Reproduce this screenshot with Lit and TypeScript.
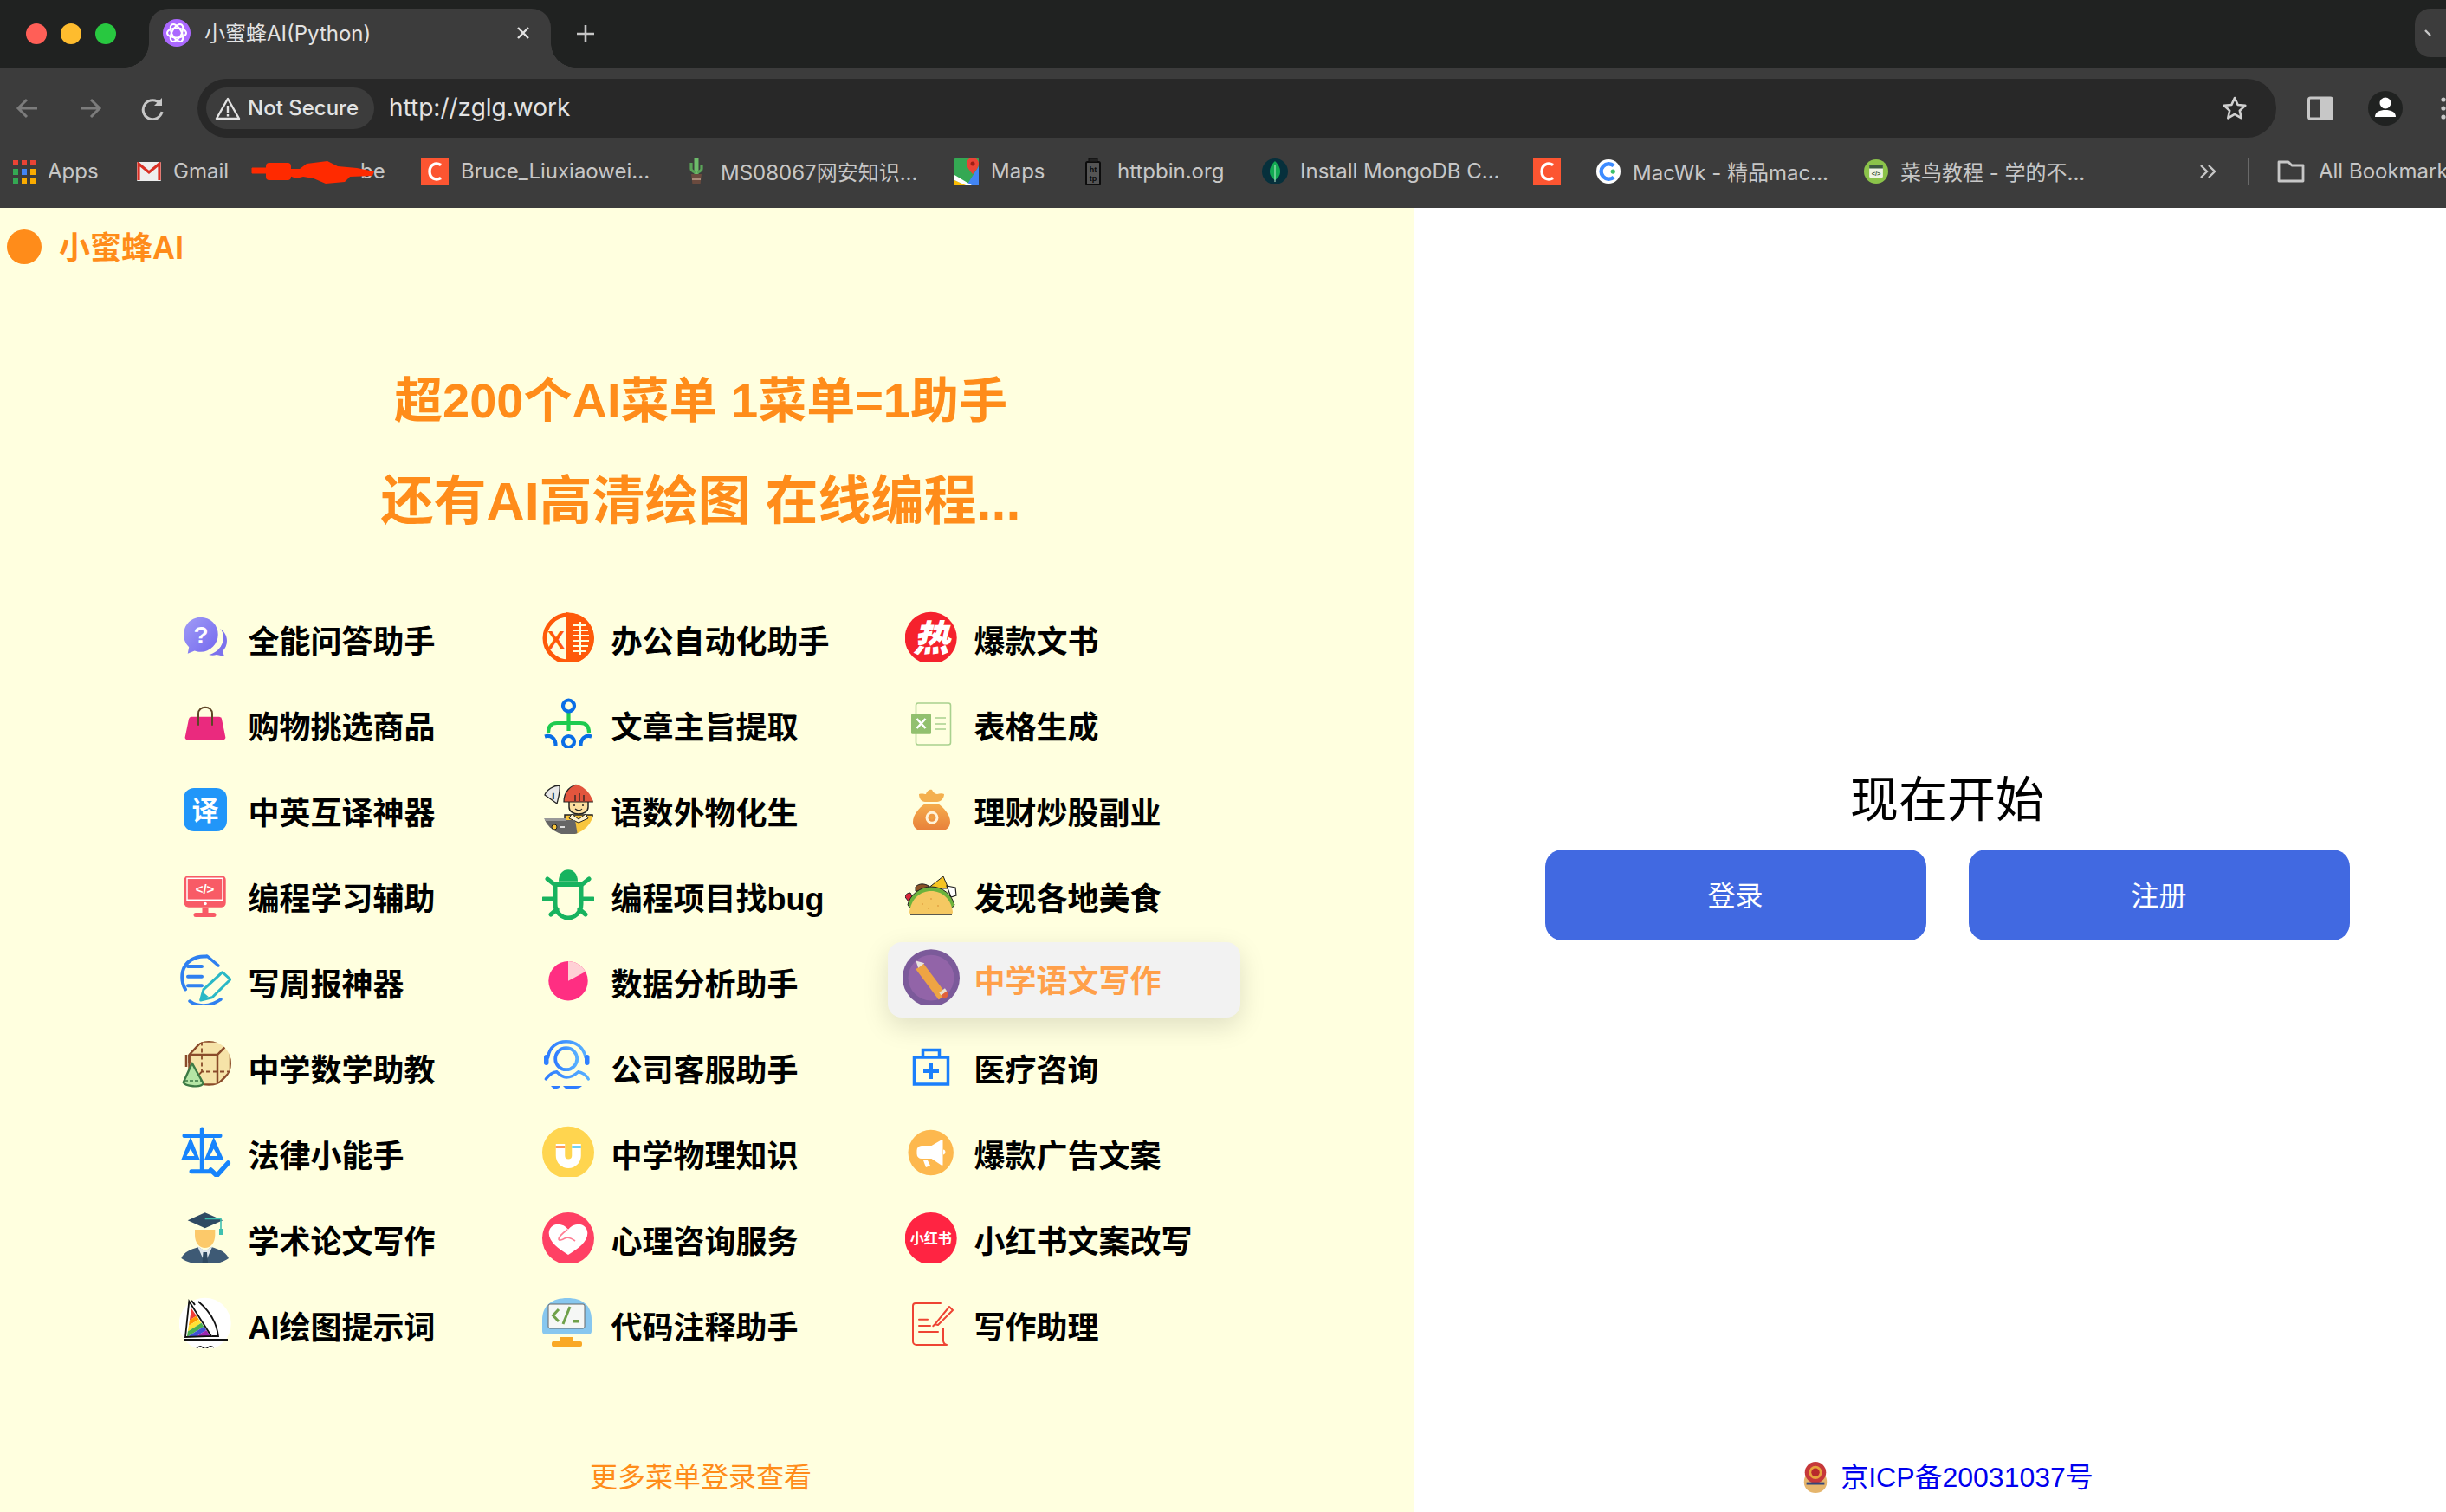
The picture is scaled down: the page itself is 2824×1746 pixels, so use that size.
import { LitElement, html, css, TemplateResult } from "lit";
import { customElement } from "lit/decorators.js";

const CJK = "'Noto Sans CJK SC'";

// 60x60 menu icons, drawn by eye from the reference
const icons: Record<string, TemplateResult> = {
  ask: html`<svg viewBox="0 0 60 60"><defs><linearGradient id="ask" x1="0" y1="0" x2="1" y2="1"><stop offset="0" stop-color="#a09cf6"/><stop offset="1" stop-color="#7468ee"/></linearGradient></defs>
    <path d="M47 21c5 3 8 8 8 14 0 5-2 9-5 12l2 6-9-2c-3 1-6 1-9 0 9-2 17-10 17-20 0-4-1-7-4-10z" fill="#7c72ec"/>
    <path d="M24.700 7.700a20 20 0 0 1 0 40c-2.500 0-5-.5-7-1.300l-8 3.300 1.500-7.500a20 20 0 0 1 13.500-34.500z" fill="url(#ask)"/>
    <text x="25" y="38" font-size="28" font-weight="700" fill="#fff" text-anchor="middle" font-family="Liberation Sans">?</text></svg>`,
  bag: html`<svg viewBox="0 0 60 60"><path d="M14 23.700h32a3 3 0 0 1 3 2.500l4.300 21a2.600 2.600 0 0 1-2.600 3.100H9.300a2.600 2.600 0 0 1-2.600-3.100l4.300-21a3 3 0 0 1 3-2.500z" fill="#ea2a7e"/>
    <path d="M22 33.700V20c0-4.500 3.500-7.300 8-7.300s8 2.800 8 7.300v13.700" fill="none" stroke="#5f4526" stroke-width="2"/></svg>`,
  translate: html`<svg viewBox="0 0 60 60"><rect x="5" y="7" width="50" height="50" rx="12" fill="#2196f9"/>
    <text x="30" y="44" font-size="31" font-weight="700" fill="#fff" text-anchor="middle" font-family=${CJK}>译</text></svg>`,
  monitor: html`<svg viewBox="0 0 60 60"><rect x="5.700" y="9" width="48" height="36.700" rx="5" fill="#f85b66"/>
    <rect x="9" y="12.300" width="41" height="25" fill="none" stroke="#fff" stroke-width="1.500"/>
    <text x="29.500" y="30" font-size="15" font-weight="700" fill="#fff" text-anchor="middle" font-family="Liberation Sans">&lt;/&gt;</text>
    <circle cx="30" cy="41.500" r="1.800" fill="#fff"/>
    <path d="M26.500 45.700h7V52h-7zM19 52h21a2.500 2.500 0 0 1 0 5H19a2.500 2.500 0 0 1 0-5z" fill="#f85b66"/></svg>`,
  report: html`<svg viewBox="0 0 60 60"><g fill="none" stroke="#2f80f0" stroke-linecap="round" stroke-width="4">
    <path d="M31 3.500c-13-1-24 6-27 17-1.500 7-1 14 3 21"/><path d="M32 3l13 11" stroke-width="3.500"/><path d="M12 55c9 7 23 7 36-2" stroke-width="3.500"/>
    <path d="M10 15h16M10 26.700h16M10 37.300h16"/></g>
    <path d="M24.700 54L28 41.700 49.700 21.700 59 30 38 50.700z" fill="none" stroke="#2ab8c6" stroke-width="3" stroke-linejoin="round"/><path d="M24.700 54l3-9 6 5z" fill="#2ab8c6"/></svg>`,
  math: html`<svg viewBox="0 0 60 60"><defs><clipPath id="math"><circle cx="34" cy="28" r="26"/></clipPath></defs>
    <g clip-path="url(#math)"><path d="M12 18L26 2h34v36L44 53H12z" fill="#f6e3a8"/>
    <g fill="none" stroke="#8a4b2a" stroke-width="2.500"><path d="M11.500 18L26 2.500h33v35L44 52.500H11.500zM11.500 18h32.500v34.500M44 18L59 2.500"/>
    <path d="M26 2.500v35h33M26 37.500L11.500 52.500" stroke-dasharray="5 3" stroke-width="1.800"/></g></g>
    <path d="M8 18v14M11.500 18v10" stroke="#8a4b2a" stroke-width="2.500"/>
    <path d="M14.700 27.700L4.700 50c2 4 20 7 23 1z" fill="#b5e5a5" stroke="#3d7a45" stroke-width="2.400" stroke-linejoin="round"/>
    <path d="M6 48h21" stroke="#3d7a45" stroke-width="1.500" stroke-dasharray="4 2" fill="none"/></svg>`,
  law: html`<svg viewBox="0 0 60 60"><path d="M26.300 5v48.700M6 12.500h41M14 53.700h24" fill="none" stroke="#1784fc" stroke-width="5" stroke-linecap="round"/>
    <path fill="#1784fc" fill-rule="evenodd" d="M13 14L2.300 40.300h21.400zM13 27.500l-4.500 8.500h9zM39.700 14L29 40.300h22.300zM39.700 27.500l-4.500 8.500h9z"/>
    <path d="M36.300 52l7 6.500L56.300 44" fill="none" stroke="#1784fc" stroke-width="5.500" stroke-linecap="round" stroke-linejoin="round"/></svg>`,
  grad: html`<svg viewBox="0 0 60 60"><path d="M18 22h23.300v6c0 9-5 15-11.600 15S18 37 18 28z" fill="#fcc96a"/>
    <path d="M2.300 55c3-7 10-10 20-13l7.400 5 7.300-5c10 3 17 6 20 13-7 5-16 7-27.300 7S9.300 60 2.300 55z" fill="#3e5a75"/>
    <path d="M21 41l8.700 20 8.700-20-8.700 5.500z" fill="#dfe7ee"/><path d="M27.500 48h4.500l1 13h-6.500z" fill="#2f4a63"/>
    <path d="M9.700 11.300L29.700 2.300l20.600 9-20.600 9z" fill="#2f4a63"/><path d="M29.700 9.500h18.300v13" fill="none" stroke="#3fc0b0" stroke-width="1.600"/><rect x="46" y="21" width="4" height="7" fill="#3fc0b0"/></svg>`,
  sail: html`<svg viewBox="0 0 60 60"><circle cx="29.700" cy="31.700" r="30" fill="#fff"/>
    <defs><clipPath id="sail"><path d="M14 14l22 32H9z"/></clipPath></defs>
    <g clip-path="url(#sail)"><g transform="rotate(-32 24 34)">
      <rect x="-10" y="10" width="70" height="12" fill="#ef3b36"/><rect x="-10" y="22" width="70" height="5" fill="#ff9800"/><rect x="-10" y="27" width="70" height="5" fill="#ffe135"/><rect x="-10" y="32" width="70" height="5" fill="#4caf50"/><rect x="-10" y="37" width="70" height="5" fill="#3f51d5"/><rect x="-10" y="42" width="70" height="14" fill="#9c27b0"/></g></g>
    <g fill="none" stroke="#111" stroke-width="1.800"><path d="M11.300 5.700L37 46 7 47zM22 6c12 10 21 24 23 40l-7 0M14 5c2 2 3 3 4 5"/><path d="M5 50h51" stroke-width="2.200"/><path d="M20 60c3-3 5-3 7-1s4 2 6 0 4-2 7 0" stroke-width="1.300"/></g></svg>`,

  office: html`<svg viewBox="0 0 60 60"><circle cx="30" cy="32" r="27" fill="none" stroke="#ff5a0a" stroke-width="5"/>
    <path d="M28 2l6 1.500h0c14 0 26 13 26 28.500S48 60 34 60v2l-6-1.500z" fill="#ff5a0a"/>
    <g fill="#ffffdf"><rect x="35" y="16" width="16" height="2"/><rect x="35" y="22" width="18" height="2"/><rect x="35" y="28" width="19" height="2"/><rect x="35" y="34" width="19" height="2"/><rect x="35" y="40" width="18" height="2"/><rect x="35" y="46" width="16" height="2"/><rect x="43" y="13" width="2" height="38"/></g>
    <text x="16" y="44" font-size="30" fill="#ff5a0a" text-anchor="middle" font-family="Liberation Sans">X</text></svg>`,
  tree: html`<svg viewBox="0 0 60 60"><g fill="none" stroke-width="4.200">
    <path d="M30.500 19v21M7 42c0-7 3-11 10-11h27c7 0 10 4 10 11" stroke="#1ecb4f"/>
    <g stroke="#0a6ee6"><circle cx="30.500" cy="11" r="6.500"/><circle cx="30.500" cy="52.500" r="6.500"/><path d="M3 46.500c7-2 13 2 12.500 11M57 46.500c-7-2-13 2-12.500 11"/></g></g></svg>`,
  tutor: html`<svg viewBox="0 0 60 60"><defs><clipPath id="tutor"><circle cx="30" cy="31" r="30"/></clipPath></defs>
    <g clip-path="url(#tutor)"><path d="M26 38h32l4 24H26z" fill="#f8c63d" stroke="#222" stroke-width="1.500"/>
    <path d="M34 37l8 6 8-6 3 5-11 5-11-5z" fill="#fff4d0" stroke="#222"/>
    <path d="M0 44h38l3 18H0z" fill="#666"/><rect x="0" y="42" width="27" height="3" fill="#999"/><circle cx="14" cy="52" r="3" fill="#f8c63d" stroke="#222"/><rect x="21" y="51" width="5" height="2" fill="#ddd"/>
    <path d="M31 20h22v9c0 5-5 8-11 8s-11-3-11-8z" fill="#fbdf9f" stroke="#222" stroke-width="1.500"/>
    <path d="M25 23c0-12 8-20 17-20s17 8 17 20H25z" fill="#e2553d" stroke="#222" stroke-width="1.200"/>
    <path d="M38 15v7M43 13v9M48 15v7" stroke="#222" stroke-width="1.300"/><circle cx="37" cy="27" r="1" fill="#222"/><circle cx="47" cy="27" r="1" fill="#222"/><path d="M38 31c3 2.500 6 2.500 8 0" fill="none" stroke="#222" stroke-width="1.200"/></g>
    <path d="M3 15C5 9 13 4 20 4c1 7-1 13-3 21z" fill="#e8e8e8" stroke="#222" stroke-width="1.300"/><text x="11" y="20" font-size="13" font-weight="700" fill="#222" font-family="Liberation Sans">i</text></svg>`,
  bug: html`<svg viewBox="0 0 60 60"><g fill="none" stroke="#17b35f" stroke-width="5" stroke-linecap="round">
    <path d="M15 19.500h30V42c0 10-8 16-15 16S15 52 15 42z"/>
    <path d="M6 13l9 7M54 13l-9 7M1 36h13M59 36H46M10 54l7-6M50 54l-7-6"/></g>
    <path d="M19 15.700C19 7 24 2.300 30 2.300S41 7 41 15.700z" fill="#17b35f"/></svg>`,
  pie: html`<svg viewBox="0 0 60 60"><circle cx="30" cy="31.700" r="22.700" fill="#ff2e82"/><path d="M30 31.700V9a22.700 22.700 0 0 1 20 12z" fill="#ffd0d5"/></svg>`,
  service: html`<svg viewBox="0 0 60 60"><defs><linearGradient id="svc" x1="0" y1="0" x2="1" y2="0"><stop offset="0" stop-color="#2f7dff"/><stop offset="1" stop-color="#58b0ff"/></linearGradient></defs>
    <g fill="none" stroke="url(#svc)" stroke-linecap="round">
    <circle cx="27.700" cy="22.700" r="12.500" stroke-width="3.800"/>
    <path d="M6.700 21C8 9 17 2.700 27.700 2.700S48 9 50 21" stroke-width="3.500"/>
    <path d="M4.300 46c3-4 8-8 12.400-8.300 3 3 7 6 11.300 6.300 5 0 10-3 13.700-6.300C46 38 51 42 53.300 46" stroke-width="3.400"/></g>
    <path d="M10 54h11a5 5 0 0 1-5 3h-3zM24 54h22c-2 2-4 3-7 3H27z" fill="#2f7dff"/>
    <rect x="2" y="18" width="5.500" height="12" rx="2.700" fill="#2f80ff"/><rect x="49" y="18" width="5.500" height="12" rx="2.700" fill="#2f80ff"/></svg>`,
  magnet: html`<svg viewBox="0 0 60 60"><circle cx="30" cy="31.700" r="30" fill="#ffd54f"/>
    <path d="M21 22v13.500a9.250 9.250 0 0 0 18.500 0V22" fill="none" stroke="#fff" stroke-width="10.500"/>
    <rect x="15.700" y="24" width="10.500" height="3" fill="#ff9a5a"/><rect x="34.300" y="24" width="10.500" height="3" fill="#6fd0f5"/></svg>`,
  heart: html`<svg viewBox="0 0 60 60"><circle cx="30" cy="32" r="30" fill="#ff4164"/>
    <path d="M30 51C19 44 7.700 36 7.700 26c0-6 4.500-10.300 10.300-10.300 5 0 9 2 12 6 3-4 7-6 12-6 5.800 0 10.300 4.300 10.300 10.300 0 10-11 18-22.300 25z" fill="#fff"/>
    <path d="M29 22c-4 3-10 8-10 11 0 2 4 1 7-1 4-2 8 0 12 3" fill="none" stroke="#ff7d94" stroke-width="1.600"/></svg>`,
  code: html`<svg viewBox="0 0 60 60"><path d="M0 27C0 10 12 2 29 2s28 8 28 25v13a4 4 0 0 1-4 4H4a4 4 0 0 1-4-4z" fill="#87c7ef"/>
    <rect x="7" y="9" width="42" height="28" rx="2" fill="#f5f7f5" stroke="#666" stroke-width="1"/>
    <path d="M19 15l-6.500 7 6.500 7" fill="none" stroke="#6fa04a" stroke-width="3"/><path d="M32 12l-8 20" stroke="#6fa04a" stroke-width="3"/><rect x="35" y="27" width="8" height="3.500" fill="#6fa04a"/>
    <rect x="21" y="47" width="14" height="5" fill="#f9a825"/><rect x="11" y="52" width="35" height="6" rx="2" fill="#f9a825"/></svg>`,

  hot: html`<svg viewBox="0 0 60 60"><circle cx="29.700" cy="31.700" r="30" fill="#f5222d"/>
    <text x="30" y="47" font-size="42" font-weight="900" fill="#fff" text-anchor="middle" font-style="italic" font-family=${CJK}>热</text></svg>`,
  sheet: html`<svg viewBox="0 0 60 60"><rect x="12.500" y="8" width="40" height="48" rx="2.500" fill="none" stroke="#a9d18e" stroke-width="1.600"/>
    <rect x="7" y="20" width="23" height="23.700" rx="1.500" fill="#92c06f"/><path d="M13.500 26l10 11M23.500 26l-10 11" stroke="#fff" stroke-width="2.600"/>
    <path d="M34 25h13M34 32h13M34 38h13" stroke="#a9d18e" stroke-width="1.600"/></svg>`,
  money: html`<svg viewBox="0 0 60 60"><defs><linearGradient id="money" x1="0" y1="0" x2="0" y2="1"><stop offset="0" stop-color="#f5ad4c"/><stop offset="1" stop-color="#e8803a"/></linearGradient></defs>
    <path d="M16 14c4-1 6 0 8 0 1-3 4-6 7-5 1 2 3 5 6 5 3-1 6-1 8 0 0 5-4 9-8 9H23c-4 0-7-4-7-9z" fill="#f4b04f"/>
    <path d="M23 25h15c7 5 14 13 14 21 0 6-4 10-10 10H19c-6 0-10-4-10-10 0-8 7-16 14-21z" fill="url(#money)"/>
    <circle cx="31" cy="41.300" r="6" fill="none" stroke="#fff3d8" stroke-width="3"/><path d="M31 38.500l2.800 2.800-2.800 2.800-2.800-2.800z" fill="#f0a040"/></svg>`,
  taco: html`<svg viewBox="0 0 60 60"><path d="M26 24L44 10l6 14z" fill="#f6c420" stroke="#222" stroke-width="1"/>
    <path d="M12 22c4-4 10-4 15-1l-3 6H12z" fill="#8a5226" stroke="#222" stroke-width="1"/>
    <path d="M48 21l10 2 1 9-6 2z" fill="#fff" stroke="#222" stroke-width="1.200"/>
    <path d="M0 34c0-3 3-5 6-5l3 6-5 4z" fill="#d9263a" stroke="#222"/>
    <path d="M3 43c2-11 14-21 27-21s24 9 27 21l-5 6H8z" fill="#6cb33c" stroke="#222" stroke-width="1"/>
    <path d="M5 51c2-15 12-24 25-24s23 9 25 24c0 2-1 3-3 3H8c-2 0-3-1-3-3z" fill="#f5c862"/><path d="M6 54h48" stroke="#222" stroke-width="1.500"/>
    <g fill="#e0a040"><circle cx="20" cy="42" r=".9"/><circle cx="30" cy="36" r=".9"/><circle cx="38" cy="44" r=".9"/><circle cx="27" cy="47" r=".9"/></g></svg>`,
  pencil: html`<svg viewBox="0 0 60 60"><circle cx="30" cy="32" r="30" fill="#7b5a9a"/><circle cx="30" cy="32" r="24" fill="#9264a8"/>
    <path d="M18 20l24 32" stroke="#eea444" stroke-width="10" fill="none"/><path d="M38.500 47.500l6-4.500 2 3-6 4.500z" fill="#e8e0d0"/>
    <path d="M40.500 50.500l6-4.500c2 3 1 6-1 7.500-2 1-4 0-5-3z" fill="#e0603c"/><path d="M14 14l9 2.500-6.500 5z" fill="#e9e4de"/></svg>`,
  medical: html`<svg viewBox="0 0 60 60"><g fill="none" stroke="#1a7ffb" stroke-width="3.500"><rect x="10.500" y="21" width="39" height="31"/><path d="M20.500 21v-8.500h19V21"/></g>
    <path d="M21 37h18M30 28v18" stroke="#1a7ffb" stroke-width="4"/></svg>`,
  ad: html`<svg viewBox="0 0 60 60"><circle cx="29.700" cy="32" r="26.200" fill="#fdb84e"/>
    <path d="M42.500 17l-12 7H19a5.500 5.500 0 0 0-5.500 5.500v4A5.500 5.500 0 0 0 19 39h11.500l12 8a1 1 0 0 0 1-1V18a1 1 0 0 0-1-1z" fill="#fff"/>
    <path d="M44 28.500c3 0 3.500 5.500 0 6z" fill="#fff"/><path d="M21 41l5 0 3 6-5 2z" fill="#fff"/></svg>`,
  xhs: html`<svg viewBox="0 0 60 60"><circle cx="29.700" cy="32" r="30" fill="#ff2442"/>
    <text x="29.700" y="38" font-size="16" font-weight="700" fill="#fff" text-anchor="middle" font-family=${CJK}>小红书</text></svg>`,
  write: html`<svg viewBox="0 0 60 60"><g fill="none" stroke="#ee4433" stroke-width="2" stroke-linecap="round" stroke-linejoin="round">
    <path d="M41 8H12a3 3 0 0 0-3 3v41a4 4 0 0 0 4 4h35c-3-1-4-3-4-5V37"/><path d="M16 26.700h10M16 34h13M16 41h22"/>
    <path d="M34.300 32.300L51 12l4 4-17 17zM34.300 32.300l-2 2"/></g></svg>`,
};

const menu: [string, string][][] = [
  [["ask", "全能问答助手"], ["office", "办公自动化助手"], ["hot", "爆款文书"]],
  [["bag", "购物挑选商品"], ["tree", "文章主旨提取"], ["sheet", "表格生成"]],
  [["translate", "中英互译神器"], ["tutor", "语数外物化生"], ["money", "理财炒股副业"]],
  [["monitor", "编程学习辅助"], ["bug", "编程项目找bug"], ["taco", "发现各地美食"]],
  [["report", "写周报神器"], ["pie", "数据分析助手"], ["pencil", "中学语文写作"]],
  [["math", "中学数学助教"], ["service", "公司客服助手"], ["medical", "医疗咨询"]],
  [["law", "法律小能手"], ["magnet", "中学物理知识"], ["ad", "爆款广告文案"]],
  [["grad", "学术论文写作"], ["heart", "心理咨询服务"], ["xhs", "小红书文案改写"]],
  [["sail", "AI绘图提示词"], ["code", "代码注释助手"], ["write", "写作助理"]],
];

const csdn = html`<svg class="fav" width="32" height="32" viewBox="0 0 32 32"><rect width="32" height="32" fill="#fc5531"/><path d="M23 8.500C17 5 10 8 10 16s7 11 13 7.500" fill="none" stroke="#fff" stroke-width="3.400"/></svg>`;

const favicons: Record<string, TemplateResult> = {
  apps: html`<svg width="26" height="27" viewBox="0 0 26 27">
    <g fill="#ea4335"><rect width="6" height="6"/><rect x="10" width="6" height="6"/><rect x="20" width="6" height="6"/></g>
    <rect y="10" width="6" height="7" fill="#34a853"/><rect x="10" y="10" width="6" height="7" fill="#4285f4"/><rect x="20" y="10" width="6" height="7" fill="#f9ab00"/>
    <rect y="21" width="6" height="6" fill="#34a853"/><rect x="10" y="21" width="6" height="6" fill="#f9ab00"/><rect x="20" y="21" width="6" height="6" fill="#f9ab00"/></svg>`,
  gmail: html`<svg width="28" height="22" viewBox="0 0 28 22"><rect width="28" height="22" rx="1" fill="#eee"/><path d="M2 21V2l12 10L26 2v19" fill="none" stroke="#d93025" stroke-width="3.200"/></svg>`,
  csdn,
  cactus: html`<svg width="28" height="32" viewBox="0 0 28 32"><path d="M14 1v18" stroke="#6dbb6a" stroke-width="5"/><path d="M8 6v7c0 2 2 3 5 4M20 8v5c0 2-2 3-5 4" fill="none" stroke="#5aa458" stroke-width="3.200"/><path d="M8 19h12l-1.500 12h-9z" fill="#6a4a3e"/><rect x="9" y="23" width="10" height="3" fill="#a98a78"/></svg>`,
  maps: html`<svg width="28" height="32" viewBox="0 0 28 32"><rect width="28" height="32" rx="2" fill="#34a853"/><path d="M14 32L28 10v22z" fill="#4285f4"/><path d="M0 26L14 32H0z" fill="#fbbc04"/><path d="M0 20L20 32h-7L0 26z" fill="#fff"/><path d="M21 0c4 0 7 3 7 7 0 5-7 12-7 12s-7-7-7-12c0-4 3-7 7-7z" fill="#ea4335"/><circle cx="21" cy="7" r="2.500" fill="#9c1f16"/></svg>`,
  httpbin: html`<svg width="28" height="32" viewBox="0 0 28 32"><rect x="6" y="5" width="16" height="27" rx="1.500" fill="#555" stroke="#0c0c0c" stroke-width="2"/><rect x="9" y="1" width="10" height="4" fill="#222" stroke="#0c0c0c" stroke-width="1"/><text x="14" y="17" font-size="9" font-weight="700" fill="#0c0c0c" text-anchor="middle" font-family="Liberation Sans">ht</text><text x="14" y="27" font-size="9" font-weight="700" fill="#0c0c0c" text-anchor="middle" font-family="Liberation Sans">tp</text></svg>`,
  mongo: html`<svg width="30" height="32" viewBox="0 0 30 32"><circle cx="15" cy="16" r="15" fill="#06303c"/><path d="M15 4c5 5 6 9 6 12 0 5-3 8-6 10-3-2-6-5-6-10 0-3 1-7 6-12z" fill="#13aa52"/><path d="M15 8v20" stroke="#c1f0d0" stroke-width="1"/></svg>`,
  macwk: html`<svg width="28" height="32" viewBox="0 0 32 32"><circle cx="16" cy="16" r="16" fill="#fff"/><path d="M23 8.500a10 10 0 1 0 0 15" fill="none" stroke="#3d8bff" stroke-width="5"/><circle cx="22" cy="16" r="3" fill="#3cc06a"/></svg>`,
  runoob: html`<svg width="28" height="32" viewBox="0 0 32 32"><circle cx="16" cy="16" r="16" fill="#8bc34a"/><rect x="7" y="8" width="18" height="16" rx="1.500" fill="#eef3e4"/><rect x="7" y="8" width="18" height="4" fill="#3d5a40"/><text x="16" y="22" font-size="8.500" font-weight="700" fill="#3d5a40" text-anchor="middle" font-family="Liberation Sans">&lt;/&gt;</text></svg>`,
};

// widths are the distance to the next bookmark in the bar
const bookmarks = [
  { icon: "apps", label: "Apps", width: 143 },
  { icon: "gmail", label: "Gmail", width: 132 },
  { icon: "", label: "", width: 196 },
  { icon: "csdn", label: "Bruce_Liuxiaowei...", width: 304 },
  { icon: "cactus", label: "MS08067网安知识...", width: 312 },
  { icon: "maps", label: "Maps", width: 146 },
  { icon: "httpbin", label: "httpbin.org", width: 209 },
  { icon: "mongo", label: "Install MongoDB C...", width: 313 },
  { icon: "csdn", label: "", width: 73 },
  { icon: "macwk", label: "MacWk - 精品mac...", width: 309 },
  { icon: "runoob", label: "菜鸟教程 - 学的不...", width: 387 },
];

@customElement("browser-bar")
export class BrowserBar extends LitElement {
  static styles = css`
    :host {
      display: block;
      height: 240px;
      background: #3c3c3c;
      font-family: Inter, "Noto Sans CJK SC", sans-serif;
      color: #c7c7c7;
      overflow: hidden;
    }
    .strip {
      height: 78px;
      background: #202221;
      display: flex;
      align-items: center;
      padding-left: 30px;
    }
    .lights { display: flex; gap: 16px; }
    .lights i { width: 24px; height: 24px; border-radius: 50%; display: block; }
    .red { background: #ff5f57; }
    .amber { background: #febc2e; }
    .green { background: #28c840; }
    .tab {
      position: relative;
      align-self: flex-end;
      margin-left: 38px;
      width: 464px;
      height: 68px;
      box-sizing: border-box;
      padding: 0 23px 12px 16px;
      background: #3c3c3c;
      border-radius: 22px 22px 0 0;
      display: flex;
      align-items: center;
      color: #e3e3e3;
      font-size: 24px;
    }
    .tab::before, .tab::after {
      content: "";
      position: absolute;
      bottom: 0;
      width: 28px;
      height: 28px;
    }
    .tab::before { left: -28px; background: radial-gradient(circle at 0 0, transparent 27.500px, #3c3c3c 28px); }
    .tab::after { right: -28px; background: radial-gradient(circle at 100% 0, transparent 27.500px, #3c3c3c 28px); }
    .tab-title { margin: 0 0 3px 16px; flex: 1; }
    .plus { margin-left: 28px; display: block; }
    .tab-search {
      margin-left: auto;
      align-self: flex-start;
      margin-top: 10px;
      width: 36px;
      height: 56px;
      background: #3c3c3c;
      border-radius: 18px 0 0 18px;
    }
    .toolbar {
      height: 82px;
      display: flex;
      align-items: center;
      padding-top: 12px;
      box-sizing: border-box;
    }
    .nav { width: 228px; display: flex; flex: none; padding-left: 18px; box-sizing: border-box; gap: 44px; }
    .omnibox {
      width: 2400px;
      height: 68px;
      flex: none;
      box-sizing: border-box;
      background: #282828;
      border-radius: 34px;
      padding: 0 10px;
      display: flex;
      align-items: center;
    }
    .pill {
      height: 48px;
      width: 194px;
      flex: none;
      box-sizing: border-box;
      padding-left: 10px;
      background: #3c3c3c;
      border-radius: 24px;
      display: flex;
      align-items: center;
      gap: 8px;
      font-size: 24px;
      font-weight: 500;
      color: #e3e3e3;
    }
    .pill span { margin-bottom: 2px; }
    .url { margin: 0 0 2px 17px; font-size: 28px; color: #e3e3e3; flex: 1; }
    .star { margin-right: 23px; }
    .tools { display: flex; align-items: center; margin-left: 36px; flex: none; }
    .tools .side { margin-right: 40px; }
    .tools .me { margin-right: 44px; }
    .bookmarks {
      height: 80px;
      box-sizing: border-box;
      padding: 0 0 4px 15px;
      display: flex;
      align-items: center;
      font-size: 24px;
      white-space: nowrap;
    }
    .mark { display: flex; align-items: center; gap: 14px; flex: none; }
    .mark span, .folder span { margin-bottom: 2px; }
    .more { width: 56px; flex: none; }
    .divider { width: 2px; height: 32px; background: #6a6a6a; flex: none; margin-right: 32px; }
    .folder { display: flex; align-items: center; gap: 16px; flex: none; }
  `;

  render() {
    return html`
      <div class="strip">
        <div class="lights"><i class="red"></i><i class="amber"></i><i class="green"></i></div>
        <div class="tab">
          <svg width="32" height="32" viewBox="0 0 32 32"><circle cx="16" cy="16" r="16" fill="#ab68ff"/>
            <g fill="none" stroke="#fff" stroke-width="2"><ellipse cx="16" cy="16" rx="11" ry="5.500"/><ellipse cx="16" cy="16" rx="11" ry="5.500" transform="rotate(60 16 16)"/><ellipse cx="16" cy="16" rx="11" ry="5.500" transform="rotate(120 16 16)"/></g></svg>
          <span class="tab-title">小蜜蜂AI(Python)</span>
          <svg width="18" height="18" viewBox="0 0 18 18"><path d="M3 3l12 12M15 3L3 15" stroke="#e3e3e3" stroke-width="2.400"/></svg>
        </div>
        <svg class="plus" width="24" height="24" viewBox="0 0 24 24"><path d="M12 2v20M2 12h20" stroke="#c7c7c7" stroke-width="2.600"/></svg>
        <div class="tab-search">
          <svg width="36" height="56" viewBox="0 0 36 56"><path d="M12 25l6 6" stroke="#c7c7c7" stroke-width="2.400" fill="none"/></svg>
        </div>
      </div>
      <div class="toolbar">
        <div class="nav">
          <svg width="28" height="28" viewBox="0 0 28 28"><path d="M25 14H4M13 4L3 14l10 10" fill="none" stroke="#7c7c7c" stroke-width="3"/></svg>
          <svg width="28" height="28" viewBox="0 0 28 28"><path d="M3 14h21M15 4l10 10-10 10" fill="none" stroke="#7c7c7c" stroke-width="3"/></svg>
          <svg width="28" height="28" viewBox="0 0 28 28"><path d="M23 9a11 11 0 1 0 2 9" fill="none" stroke="#c7c7c7" stroke-width="3"/><path d="M25 2v9h-9z" fill="#c7c7c7"/></svg>
        </div>
        <div class="omnibox">
          <div class="pill">
            <svg width="30" height="28" viewBox="0 0 30 28"><path d="M15 3L2 26h26z" fill="none" stroke="#e3e3e3" stroke-width="2.400" stroke-linejoin="round"/><path d="M15 11v8M15 21v2.500" stroke="#e3e3e3" stroke-width="2.400"/></svg>
            <span>Not Secure</span>
          </div>
          <span class="url">http://zglg.work</span>
          <svg class="star" width="30" height="30" viewBox="0 0 30 30"><path d="M15 3l3.600 8 8.700.9-6.500 5.800 1.900 8.600L15 21.800l-7.700 4.500 1.900-8.600-6.500-5.800 8.700-.9z" fill="none" stroke="#d0d0d0" stroke-width="2.600" stroke-linejoin="round"/></svg>
        </div>
        <div class="tools">
          <svg class="side" width="30" height="28" viewBox="0 0 30 28"><rect x="1.500" y="2" width="27" height="24" rx="2" fill="none" stroke="#c7c7c7" stroke-width="3"/><rect x="15" y="2" width="13" height="24" fill="#c7c7c7"/></svg>
          <svg class="me" width="40" height="40" viewBox="0 0 40 40"><circle cx="20" cy="20" r="20" fill="#202221"/><circle cx="20" cy="14" r="6.500" fill="#fff"/><path d="M8 30c0-6 6-8 12-8s12 2 12 8z" fill="#fff"/></svg>
          <svg width="6" height="26" viewBox="0 0 6 26"><circle cx="3" cy="3" r="2.600" fill="#c7c7c7"/><circle cx="3" cy="13" r="2.600" fill="#c7c7c7"/><circle cx="3" cy="23" r="2.600" fill="#c7c7c7"/></svg>
        </div>
      </div>
      <div class="bookmarks">
        ${bookmarks.map(
          (b) => html`
            <div class="mark" style="width:${b.width}px">
              ${b.icon
                ? favicons[b.icon]
                : html`<svg width="158" height="32" viewBox="0 0 158 32">
                    <text x="126" y="24" font-size="24" fill="#c7c7c7" font-family="Inter">be</text>
                    <path d="M1 12h17v6H1z" fill="#ff2a00" stroke="#ff2a00" stroke-linejoin="round"/>
                    <rect x="17" y="6" width="29" height="20" rx="4" fill="#ff2a00"/>
                    <path d="M44 13h12l8-6 24-3 12 6 22 2 20 4-2 5-26 1-6 6-22 2-14-6-12-2-8 2-8-3z" fill="#ff2a00"/></svg>`}
              ${b.label ? html`<span>${b.label}</span>` : ""}
            </div>
          `
        )}
        <span class="more">
          <svg width="20" height="18" viewBox="0 0 20 18"><path d="M2 2l7 7-7 7M11 2l7 7-7 7" fill="none" stroke="#c7c7c7" stroke-width="2.400"/></svg>
        </span>
        <div class="divider"></div>
        <div class="folder">
          <svg width="32" height="26" viewBox="0 0 32 26"><path d="M2 2h11l4 4h13v18H2z" fill="none" stroke="#c7c7c7" stroke-width="2.800" stroke-linejoin="round"/></svg>
          <span>All Bookmarks</span>
        </div>
      </div>
    `;
  }
}

@customElement("menu-grid")
export class MenuGrid extends LitElement {
  static styles = css`
    :host {
      display: grid;
      grid-template-columns: repeat(3, 407px);
      gap: 12px;
      justify-content: center;
      font-family: "Liberation Sans", "Noto Sans CJK SC", sans-serif;
    }
    .card {
      height: 87px;
      box-sizing: border-box;
      padding-left: 20px;
      display: flex;
      align-items: center;
      gap: 20px;
      border-radius: 16px;
      background: #ffffdf;
      color: #000;
      font-size: 36px;
      font-weight: 700;
      white-space: nowrap;
    }
    .card svg { display: block; width: 60px; height: 60px; flex: none; margin-bottom: 10px; }
    .card span { line-height: 1; margin-top: 4px; }
    .card.active {
      background: #f2f2f2;
      color: #ffa04a;
      transform: translateY(-4px);
      box-shadow: 0 10px 30px rgba(0, 0, 0, 0.13);
    }
    .card.active svg { transform: scale(1.1); }
  `;

  render() {
    return menu.flat().map(
      ([icon, label]) => html`
        <div class="card ${icon === "pencil" ? "active" : ""}">${icons[icon]}<span>${label}</span></div>
      `
    );
  }
}

@customElement("app-root")
export class AppRoot extends LitElement {
  static styles = css`
    :host {
      display: flex;
      flex-direction: column;
      width: 100%;
      height: 100vh;
      overflow: hidden;
      background: #fff;
      font-family: "Liberation Sans", "Noto Sans CJK SC", sans-serif;
    }
    .page { flex: 1; display: flex; min-height: 0; }
    .left {
      width: 1632px;
      flex: none;
      box-sizing: border-box;
      padding-right: 14px;
      background: #ffffdf;
      color: #ff8c1a;
      display: flex;
      flex-direction: column;
    }
    .logo {
      height: 90px;
      display: flex;
      align-items: center;
      gap: 20px;
      padding-left: 8px;
      font-size: 36px;
      font-weight: 700;
    }
    .logo i { width: 40px; height: 40px; border-radius: 50%; background: #ff8c1a; display: block; }
    .logo span { margin-bottom: 5px; }
    .headline {
      margin: 76px 0 62px;
      text-align: center;
      font-size: 56px;
      font-weight: 700;
      line-height: 114px;
    }
    .headline .second { display: block; font-size: 61px; padding-top: 2px; margin-bottom: -2px; }
    .more { margin-top: auto; padding-bottom: 20px; text-align: center; font-size: 32px; line-height: 40px; }
    .right {
      flex: 1;
      box-sizing: border-box;
      padding: 644px 0 20px 40px;
      display: flex;
      flex-direction: column;
      align-items: center;
    }
    .right h2 { margin: 0 0 17px; font-size: 56px; font-weight: 400; line-height: 80px; color: #000; }
    .buttons { display: flex; gap: 49px; }
    .btn {
      width: 440px;
      height: 105px;
      padding: 0 0 4px;
      border: none;
      border-radius: 20px;
      background: #4169e1;
      color: #fff;
      font: inherit;
      font-size: 32px;
    }
    .icp { margin-top: auto; display: flex; align-items: center; gap: 12px; font-size: 32px; line-height: 40px; color: #0000ee; }
  `;

  render() {
    return html`
      <browser-bar></browser-bar>
      <div class="page">
        <div class="left">
          <div class="logo"><i></i><span>小蜜蜂AI</span></div>
          <div class="headline">超200个AI菜单 1菜单=1助手<span class="second">还有AI高清绘图 在线编程...</span></div>
          <menu-grid></menu-grid>
          <div class="more">更多菜单登录查看</div>
        </div>
        <div class="right">
          <h2>现在开始</h2>
          <div class="buttons">
            <button class="btn">登录</button>
            <button class="btn">注册</button>
          </div>
          <div class="icp">
            <svg width="34" height="40" viewBox="0 0 36 40">
              <path d="M4 26c0 8 7 13 14 13s14-5 14-13c0-4-1-6-2-8H6c-1 2-2 4-2 8z" fill="#e5b56c"/>
              <circle cx="18" cy="14" r="13" fill="#c6383a"/><circle cx="18" cy="14" r="8" fill="#e8a33d"/><circle cx="18" cy="14" r="5" fill="#b82a2c"/>
              <path d="M7 26h22v3H7z" fill="#33457a"/>
            </svg>
            <span>京ICP备20031037号</span>
          </div>
        </div>
      </div>
    `;
  }
}
